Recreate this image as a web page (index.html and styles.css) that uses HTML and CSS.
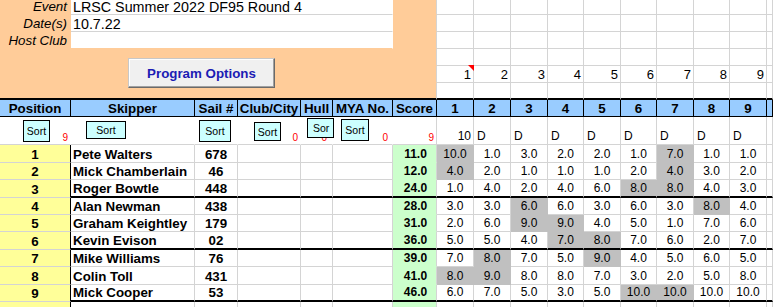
FILE: index.html
```html
<!DOCTYPE html>
<html>
<head>
<meta charset="utf-8">
<title>LRSC Summer 2022 DF95 Round 4</title>
<link rel="stylesheet" href="styles.css">
</head>
<body>
<div class="wrap">
  <div class="sheet">
    <!-- r0 -->
    <div class="c pe lab">Event</div>
    <div class="c in span5">LRSC Summer 2022 DF95 Round 4</div>
    <div class="c pe pend"></div>
    <div class="c"></div><div class="c"></div><div class="c"></div><div class="c"></div><div class="c"></div><div class="c"></div><div class="c"></div><div class="c"></div><div class="c"></div><div class="c"></div>
    <!-- r1 -->
    <div class="c pe lab">Date(s)</div>
    <div class="c in span5">10.7.22</div>
    <div class="c pe pend"></div>
    <div class="c"></div><div class="c"></div><div class="c"></div><div class="c"></div><div class="c"></div><div class="c"></div><div class="c"></div><div class="c"></div><div class="c"></div><div class="c"></div>
    <!-- r2 -->
    <div class="c pe lab">Host Club</div>
    <div class="c in inlast span5"></div>
    <div class="c pe pend"></div>
    <div class="c"></div><div class="c"></div><div class="c"></div><div class="c"></div><div class="c"></div><div class="c"></div><div class="c"></div><div class="c"></div><div class="c"></div><div class="c"></div>
    <!-- r3 -->
    <div class="c pe pend span7"></div>
    <div class="c"></div><div class="c"></div><div class="c"></div><div class="c"></div><div class="c"></div><div class="c"></div><div class="c"></div><div class="c"></div><div class="c"></div><div class="c"></div>
    <!-- r4 -->
    <div class="c pe pend span7"></div>
    <div class="c rn cm">1</div><div class="c rn">2</div><div class="c rn">3</div><div class="c rn">4</div><div class="c rn">5</div><div class="c rn">6</div><div class="c rn">7</div><div class="c rn">8</div><div class="c rn">9</div><div class="c"></div>
    <!-- r5 -->
    <div class="c pe pend span7 tk"></div>
    <div class="c tk"></div><div class="c tk"></div><div class="c tk"></div><div class="c tk"></div><div class="c tk"></div><div class="c tk"></div><div class="c tk"></div><div class="c tk"></div><div class="c tk"></div><div class="c tk"></div>
    <!-- header -->
    <div class="c hd">Position</div>
    <div class="c hd">Skipper</div>
    <div class="c hd">Sail #</div>
    <div class="c hd">Club/City</div>
    <div class="c hd">Hull</div>
    <div class="c hd">MYA No.</div>
    <div class="c hd">Score</div>
    <div class="c hd">1</div><div class="c hd">2</div><div class="c hd">3</div><div class="c hd">4</div><div class="c hd">5</div><div class="c hd">6</div><div class="c hd">7</div><div class="c hd">8</div><div class="c hd">9</div><div class="c hd"></div>
    <!-- sort row -->
    <div class="c sw rr"><span class="red">9</span></div>
    <div class="c sw"></div>
    <div class="c sw"></div>
    <div class="c sw rr"><span class="red">0</span></div>
    <div class="c sw rr hullcnt"><span class="red">0</span></div>
    <div class="c sw rr mycnt"><span class="red">0</span></div>
    <div class="c rr"><span class="red">9</span></div>
    <div class="c rr sm">10</div>
    <div class="c sm dl">D</div><div class="c sm dl">D</div><div class="c sm dl">D</div><div class="c sm dl">D</div><div class="c sm dl">D</div><div class="c sm dl">D</div><div class="c sm dl">D</div><div class="c sm dl">D</div>
    <div class="c"></div>
    <!-- data 1 -->
    <div class="c ps">1</div><div class="c sk">Pete Walters</div><div class="c sl">678</div><div class="c"></div><div class="c"></div><div class="c"></div><div class="c sc">11.0</div>
    <div class="c rv gy">10.0</div><div class="c rv">1.0</div><div class="c rv">3.0</div><div class="c rv">2.0</div><div class="c rv">2.0</div><div class="c rv">1.0</div><div class="c rv gy">7.0</div><div class="c rv">1.0</div><div class="c rv">1.0</div><div class="c"></div>
    <!-- data 2 -->
    <div class="c ps">2</div><div class="c sk">Mick Chamberlain</div><div class="c sl">46</div><div class="c"></div><div class="c"></div><div class="c"></div><div class="c sc">12.0</div>
    <div class="c rv gy">4.0</div><div class="c rv">2.0</div><div class="c rv">1.0</div><div class="c rv">1.0</div><div class="c rv">1.0</div><div class="c rv">2.0</div><div class="c rv gy">4.0</div><div class="c rv">3.0</div><div class="c rv">2.0</div><div class="c"></div>
    <!-- data 3 -->
    <div class="c ps">3</div><div class="c sk tk">Roger Bowtle</div><div class="c sl tk">448</div><div class="c tk"></div><div class="c tk"></div><div class="c tk"></div><div class="c sc tk">24.0</div>
    <div class="c rv tk">1.0</div><div class="c rv tk">4.0</div><div class="c rv tk">2.0</div><div class="c rv tk">4.0</div><div class="c rv tk">6.0</div><div class="c rv gy tk">8.0</div><div class="c rv gy tk">8.0</div><div class="c rv tk">4.0</div><div class="c rv tk">3.0</div><div class="c tk"></div>
    <!-- data 4 -->
    <div class="c ps">4</div><div class="c sk">Alan Newman</div><div class="c sl">438</div><div class="c"></div><div class="c"></div><div class="c"></div><div class="c sc">28.0</div>
    <div class="c rv">3.0</div><div class="c rv">3.0</div><div class="c rv gy">6.0</div><div class="c rv">6.0</div><div class="c rv">3.0</div><div class="c rv">6.0</div><div class="c rv">3.0</div><div class="c rv gy">8.0</div><div class="c rv">4.0</div><div class="c"></div>
    <!-- data 5 -->
    <div class="c ps">5</div><div class="c sk">Graham Keightley</div><div class="c sl">179</div><div class="c"></div><div class="c"></div><div class="c"></div><div class="c sc">31.0</div>
    <div class="c rv">2.0</div><div class="c rv">6.0</div><div class="c rv gy">9.0</div><div class="c rv gy">9.0</div><div class="c rv">4.0</div><div class="c rv">5.0</div><div class="c rv">1.0</div><div class="c rv">7.0</div><div class="c rv">6.0</div><div class="c"></div>
    <!-- data 6 -->
    <div class="c ps">6</div><div class="c sk tk">Kevin Evison</div><div class="c sl tk">02</div><div class="c tk"></div><div class="c tk"></div><div class="c tk"></div><div class="c sc tk">36.0</div>
    <div class="c rv tk">5.0</div><div class="c rv tk">5.0</div><div class="c rv tk">4.0</div><div class="c rv gy tk">7.0</div><div class="c rv gy tk">8.0</div><div class="c rv tk">7.0</div><div class="c rv tk">6.0</div><div class="c rv tk">2.0</div><div class="c rv tk">7.0</div><div class="c tk"></div>
    <!-- data 7 -->
    <div class="c ps">7</div><div class="c sk">Mike Williams</div><div class="c sl">76</div><div class="c"></div><div class="c"></div><div class="c"></div><div class="c sc">39.0</div>
    <div class="c rv">7.0</div><div class="c rv gy">8.0</div><div class="c rv">7.0</div><div class="c rv">5.0</div><div class="c rv gy">9.0</div><div class="c rv">4.0</div><div class="c rv">5.0</div><div class="c rv">6.0</div><div class="c rv">5.0</div><div class="c"></div>
    <!-- data 8 -->
    <div class="c ps">8</div><div class="c sk">Colin Toll</div><div class="c sl">431</div><div class="c"></div><div class="c"></div><div class="c"></div><div class="c sc">41.0</div>
    <div class="c rv gy">8.0</div><div class="c rv gy">9.0</div><div class="c rv">8.0</div><div class="c rv">8.0</div><div class="c rv">7.0</div><div class="c rv">3.0</div><div class="c rv">2.0</div><div class="c rv">5.0</div><div class="c rv">8.0</div><div class="c"></div>
    <!-- data 9 -->
    <div class="c ps">9</div><div class="c sk tk">Mick Cooper</div><div class="c sl tk">53</div><div class="c tk"></div><div class="c tk"></div><div class="c tk"></div><div class="c sc tk">46.0</div>
    <div class="c rv tk">6.0</div><div class="c rv tk">7.0</div><div class="c rv tk">5.0</div><div class="c rv tk">3.0</div><div class="c rv tk">5.0</div><div class="c rv gy tk">10.0</div><div class="c rv gy tk">10.0</div><div class="c rv tk">10.0</div><div class="c rv tk">10.0</div><div class="c tk"></div>
    <!-- partial row -->
    <div class="c ps"></div><div class="c"></div><div class="c"></div><div class="c"></div><div class="c"></div><div class="c"></div><div class="c sc"></div>
    <div class="c"></div><div class="c"></div><div class="c"></div><div class="c"></div><div class="c"></div><div class="c"></div><div class="c"></div><div class="c"></div><div class="c"></div><div class="c"></div>
  </div>

  <div class="prog">Program Options</div>
  <div class="sbtn sb-pos">Sort</div>
  <div class="sbtn sb-skip">Sort</div>
  <div class="sbtn sb-sail">Sort</div>
  <div class="sbtn sb-club">Sort</div>
  <div class="sbtn sb-hull">Sor</div>
  <div class="sbtn sb-mya">Sort</div>
</div>
</body>
</html>
```

FILE: styles.css
```css
body {
  margin: 0;
  background: #ffffff;
  font-family: "Liberation Sans", Arial, sans-serif;
}

.wrap {
  position: relative;
  width: 773px;
  height: 307px;
  overflow: hidden;
}

.sheet {
  display: grid;
  grid-template-columns: 71px 124px 43px 63px 32px 60px 44px 37px 37px 37px 36px 37px 36px 37px 36px 37px 6px;
  grid-template-rows: 15px 17px 17px 17px 17px 17px 17px 28px 18px 17px 18px 17px 17px 18px 17px 18px 17px 20px;
}

.c {
  box-sizing: border-box;
  min-width: 0;
  border-right: 1px solid #d4d4d4;
  border-bottom: 1px solid #d4d4d4;
  background: #ffffff;
  display: flex;
  align-items: flex-end;
  justify-content: flex-start;
  padding: 0 2px;
  overflow: hidden;
  white-space: nowrap;
  font-size: 13.33px;
  line-height: 15px;
  color: #000;
}

.span5 { grid-column: span 5; }
.span7 { grid-column: span 7; }

/* top peach panel */
.pe {
  background: #ffcc99;
  border-color: #ffcc99;
}
.pend { border-right-color: #d4d4d4; }
.lab {
  justify-content: flex-end;
  font-style: italic;
  padding-right: 3px;
  line-height: 14px;
}
.in {
  background: #ffffff;
  border-right-color: #ffffff;
  font-size: 14.3px;
  line-height: 14px;
}
.inlast { border-bottom-color: #ffcc99; }

.rn {
  justify-content: flex-end;
  font-size: 13px;
}
.cm {
  position: relative;
  overflow: visible;
}
.cm::after {
  content: "";
  position: absolute;
  top: -1px;
  right: -1px;
  border-top: 6px solid #ff0000;
  border-left: 6px solid transparent;
}

.tk { border-bottom: 2px solid #000; }

/* header */
.hd {
  background: #99ccff;
  border-right: 1px solid #000;
  border-bottom: 1px solid #000;
  align-items: center;
  justify-content: center;
  font-weight: bold;
  padding: 0;
}

/* sort row */
.sw { border-right-color: #ffffff; }
.rr { justify-content: flex-end; }
.red {
  color: #ff0000;
  font-size: 10px;
  line-height: 13px;
}
.hullcnt { padding-right: 5px; }
.mycnt { padding-right: 4px; }
.sm { font-size: 12px; }
.dl { padding-left: 3px; }

/* data */
.ps {
  background: #ffff99;
  border-right: 1px solid #000;
  justify-content: center;
  font-weight: bold;
}
.sk { font-weight: bold; }
.sl {
  font-weight: bold;
  justify-content: center;
}
.sc {
  background: #ccffcc;
  border-bottom-color: #ccffcc;
  border-right-color: #d4d4d4;
  justify-content: center;
  padding-left: 4px;
  font-weight: bold;
  font-size: 12px;
}
.rv {
  justify-content: center;
  font-size: 12px;
}
.gy {
  background: #c0c0c0;
  border-color: #c0c0c0;
}
.sc.tk, .gy.tk { border-bottom: 2px solid #000; }

/* overlay controls */
.prog {
  position: absolute;
  left: 128px;
  top: 58px;
  width: 147px;
  height: 30px;
  box-sizing: border-box;
  background: #f0f0f0;
  border: 1px solid;
  border-color: #c8c8c8 #6a6a6a #6a6a6a #c8c8c8;
  box-shadow: inset -1px -1px 0 #a0a0a0, inset 1px 1px 0 #ffffff;
  color: #1c1cb4;
  font-weight: bold;
  font-size: 13.33px;
  display: flex;
  align-items: center;
  justify-content: center;
}

.sbtn {
  position: absolute;
  box-sizing: border-box;
  border: 1px solid #000;
  background: #ccffff;
  font-size: 10.5px;
  line-height: 12px;
  display: flex;
  align-items: center;
  justify-content: center;
  overflow: hidden;
  white-space: nowrap;
}
.sb-pos { left: 23px; top: 120px; width: 27px; height: 22px; }
.sb-skip { left: 86px; top: 121px; width: 40px; height: 18px; }
.sb-sail { left: 199px; top: 120px; width: 32px; height: 22px; }
.sb-club { left: 254px; top: 122px; width: 27px; height: 19px; }
.sb-hull {
  left: 307px;
  top: 118px;
  width: 27px;
  height: 20px;
  justify-content: flex-start;
  padding: 0 2px 0 5px;
}
.sb-mya { left: 341px; top: 119px; width: 28px; height: 22px; }
```
